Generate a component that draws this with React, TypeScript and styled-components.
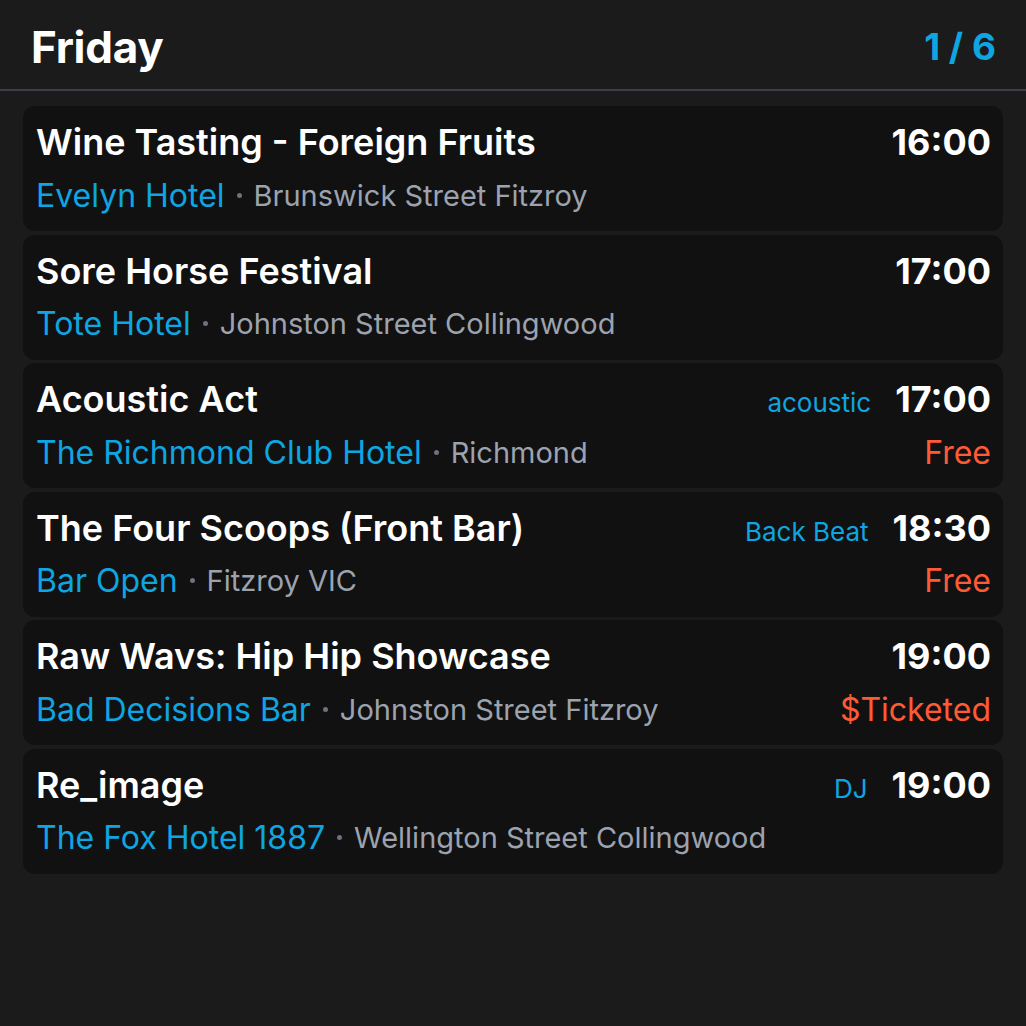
import React from "react";
import styled, { createGlobalStyle } from "styled-components";

const Global = createGlobalStyle`
  html, body { margin: 0; padding: 0; background: #1b1b1b; }
  body { font-family: Inter, "Noto Sans", "Liberation Sans", sans-serif; -webkit-font-smoothing: antialiased; }
`;

const Page = styled.div`
  width: 1026px;
  height: 1026px;
  background: #1b1b1b;
  display: flex;
  flex-direction: column;
`;

const Header = styled.header`
  height: 91px;
  box-sizing: border-box;
  padding: 4px 30px 0 31px;
  display: flex;
  align-items: center;
  justify-content: space-between;
  border-bottom: 2px solid #393e48;
`;

const Day = styled.h1`
  margin: 0;
  font-size: 44px;
  font-weight: 700;
  color: #ffffff;
  letter-spacing: -0.3px;
`;

const Counter = styled.span`
  font-size: 37px;
  font-weight: 700;
  color: #0ea5e0;
`;

const List = styled.div`
  display: flex;
  flex-direction: column;
  gap: 3.5px;
  padding: 15px 23px 0 23px;
`;

const Card = styled.div`
  height: 125px;
  box-sizing: border-box;
  background: #111111;
  border-radius: 12px;
  padding: 12px 12px 12px 13px;
  display: flex;
  flex-direction: column;
  gap: 5px;
`;

const Row = styled.div`
  display: flex;
  align-items: center;
  justify-content: space-between;
  height: 48px;
`;

const Title = styled.span`
  font-size: 36px;
  font-weight: 600;
  color: #ffffff;
`;

const Right = styled.div`
  display: flex;
  align-items: baseline;
  gap: 24px;
`;

const Tag = styled.span`
  font-size: 26px;
  color: #0ea5e0;
`;

const Time = styled.span`
  font-size: 36px;
  font-weight: 700;
  color: #ffffff;
`;

const Place = styled.div`
  display: flex;
  align-items: center;
  gap: 12px;
`;

const Venue = styled.span`
  font-size: 32px;
  color: #0ea5e0;
`;

const Dot = styled.span`
  width: 5px;
  height: 5px;
  border-radius: 50%;
  background: #6b7280;
`;

const Location = styled.span`
  font-size: 29px;
  color: #9ca3af;
`;

const Price = styled.span`
  font-size: 32px;
  color: #ff5a36;
`;

type Event = {
  title: string;
  time: string;
  venue: string;
  location: string;
  tag?: string;
  price?: string;
};

const events: Event[] = [
  { title: "Wine Tasting - Foreign Fruits", time: "16:00", venue: "Evelyn Hotel", location: "Brunswick Street Fitzroy" },
  { title: "Sore Horse Festival", time: "17:00", venue: "Tote Hotel", location: "Johnston Street Collingwood" },
  { title: "Acoustic Act", time: "17:00", venue: "The Richmond Club Hotel", location: "Richmond", tag: "acoustic", price: "Free" },
  { title: "The Four Scoops (Front Bar)", time: "18:30", venue: "Bar Open", location: "Fitzroy VIC", tag: "Back Beat", price: "Free" },
  { title: "Raw Wavs: Hip Hip Showcase", time: "19:00", venue: "Bad Decisions Bar", location: "Johnston Street Fitzroy", price: "$Ticketed" },
  { title: "Re_image", time: "19:00", venue: "The Fox Hotel 1887", location: "Wellington Street Collingwood", tag: "DJ" },
];

export default function App() {
  return (
    <Page>
      <Global />
      <Header>
        <Day>Friday</Day>
        <Counter>1 / 6</Counter>
      </Header>
      <List>
        {events.map((e, i) => (
          <Card key={i}>
            <Row>
              <Title>{e.title}</Title>
              <Right>
                {e.tag && <Tag>{e.tag}</Tag>}
                <Time>{e.time}</Time>
              </Right>
            </Row>
            <Row>
              <Place>
                <Venue>{e.venue}</Venue>
                <Dot />
                <Location>{e.location}</Location>
              </Place>
              {e.price && <Price>{e.price}</Price>}
            </Row>
          </Card>
        ))}
      </List>
    </Page>
  );
}
